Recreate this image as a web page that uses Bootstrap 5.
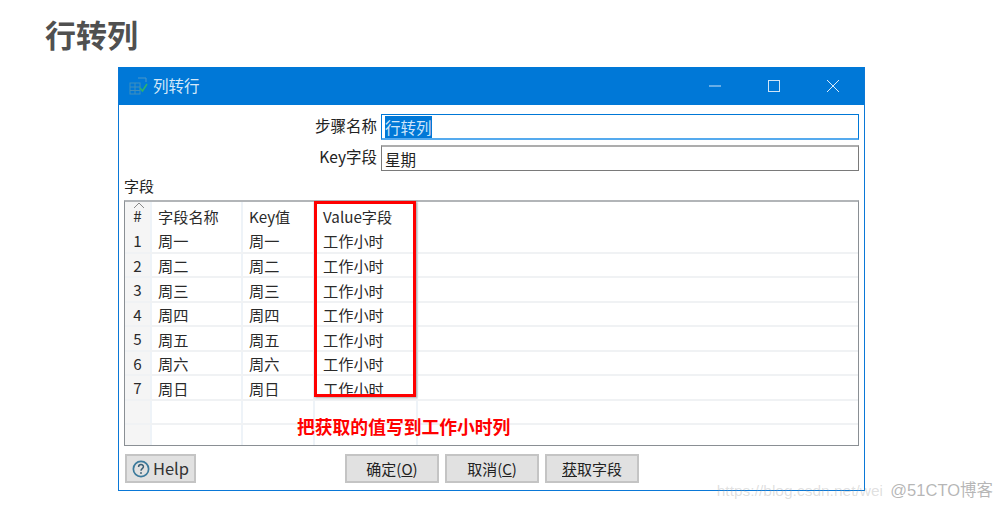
<!DOCTYPE html>
<html lang="zh-CN">
<head>
  <meta charset="UTF-8">
  <title>行转列</title>
  <link href="https://cdn.jsdelivr.net/npm/bootstrap@5.3.2/dist/css/bootstrap.min.css" rel="stylesheet">
  <style>
    html, body { height: 509px; overflow: hidden; }
    body { background: #fff; color: #222; font-family: "Noto Sans CJK SC", "Liberation Sans", sans-serif; font-size: 15.5px; position: relative; }
    .slide-title { font-size: 31px; line-height: 42px; font-weight: 700; color: #505050; padding: 13px 0 0 45px; height: 67px; margin: 0; }
    .dlg { width: 747px; height: 424px; margin-left: 118px; border: 1px solid #0a78d7; border-top: 0; position: relative; }
    .dlg-bar { height: 38px; background: #0078d7; color: #d5e8f8; font-size: 15.5px; padding-left: 10px; }
    .dlg-bar .dlg-name { margin-left: 4px; }
    .win-btns { margin-left: auto; padding-right: 24px; gap: 45px; }
    .win-btns svg { display: block; }
    .dlg-body { padding: 9px 5px 0 5px; }
    .form-line { height: 26px; margin-bottom: 5px; }
    .form-line label { width: 257px; text-align: right; padding-right: 4px; line-height: 22px; }
    .fake-input { width: 478px; height: 26px; border: 1px solid #7a7a7a; border-top: 2px solid #adadad; padding: 0 3px; line-height: 24px; font-size: 15.5px; }
    .fake-input.on { border: 1px solid #0078d7; border-bottom: 2px solid #55aaee; }
    .fake-input mark { background: #0078d7; color: #cfe6fa; padding: 0; }
    .grid-label { line-height: 20px; margin-top: 4px; margin-bottom: 4px; font-size: 15px; }
    .grid-box { width: 735px; height: 246px; border: 1px solid #8a8f94; border-top: 2px solid #b2b5b8; overflow: hidden; position: relative; }
    .grid-tbl { table-layout: fixed; width: 733px; border-collapse: collapse; font-size: 15.2px; }
    .grid-tbl th, .grid-tbl td { height: 24.5px; padding: 1px 0 0 6px; font-weight: 400; line-height: 20px; border-right: 2px solid #eef3f8; border-bottom: 2px solid #f0f2f4; color: #2a2a2a; white-space: nowrap; overflow: hidden; vertical-align: middle; }
    .grid-tbl th { height: 26px; border-bottom: 0; padding-top: 2px; }
    .grid-tbl td:last-child, .grid-tbl th:last-child { border-right: 0; }
    .grid-tbl .num-col { background: #f5f5f5; text-align: center; padding: 0; }
    .sort-mark { position: absolute; left: 8px; top: 0; }
    .red-frame { position: absolute; left: 195px; top: 134px; width: 102px; height: 196px; border: 3px solid #f00; box-shadow: 1px 1px 2px rgba(0,0,0,.35); pointer-events: none; }
    .red-note { position: absolute; left: 178px; top: 348px; color: #f00; font-size: 17.8px; font-weight: 700; line-height: 22px; white-space: nowrap; }
    .foot-row { padding-top: 8px; }
    .dlg-btn { height: 29px; background: #e1e1e1; border: 2px solid #c4c4c4; color: #222; font-size: 15px; line-height: 25px; text-align: center; padding: 0; }
    .help-btn { width: 71px; margin-left: 1px; font-size: 16.5px; color: #333; }
    .ok-btn { width: 94px; margin-left: 149px; }
    .cancel-btn { width: 94px; margin-left: 6px; }
    .fetch-btn { width: 94px; margin-left: 6px; }
    .help-ico { vertical-align: -3px; margin-right: 3px; }
    .wm { position: absolute; right: 9px; top: 479px; font-family: "Liberation Sans", "Noto Sans CJK SC", sans-serif; font-size: 15.5px; line-height: 22px; color: rgba(150,150,150,.3); white-space: nowrap; }
    .wm b { font-weight: 400; font-size: 16.5px; margin-left: 3px; color: rgba(110,110,110,.5); }
  </style>
</head>
<body>
<h1 class="slide-title">行转列</h1>

<div class="dlg">
  <div class="dlg-bar d-flex align-items-center">
    <svg width="20" height="20" viewBox="0 0 20 20">
      <rect x="1" y="7" width="10" height="11" fill="none" stroke="#3f8fbe" stroke-width="1"/>
      <path d="M1 11h10M1 14.5h10M6 7v11" stroke="#3f8fbe" fill="none"/>
      <path d="M9 2h8v4" stroke="#4a97c8" fill="none"/>
      <path d="M11 12l2.5 3L18 8" stroke="#2fb36a" stroke-width="1.6" fill="none"/>
    </svg>
    <span class="dlg-name">列转行</span>
    <div class="win-btns d-flex align-items-center">
      <svg width="14" height="14" viewBox="0 0 14 14"><path d="M1 7h12" stroke="#cfe4f7" stroke-width="1"/></svg>
      <svg width="14" height="14" viewBox="0 0 14 14"><rect x="1.5" y="1.5" width="11" height="11" fill="none" stroke="#cfe4f7" stroke-width="1"/></svg>
      <svg width="14" height="14" viewBox="0 0 14 14"><path d="M1 1l12 12M13 1L1 13" stroke="#dcecfa" stroke-width="1"/></svg>
    </div>
  </div>

  <div class="dlg-body">
    <div class="form-line d-flex">
      <label>步骤名称</label>
      <div class="fake-input on"><mark>行转列</mark></div>
    </div>
    <div class="form-line d-flex">
      <label>Key字段</label>
      <div class="fake-input">星期</div>
    </div>
    <div class="grid-label">字段</div>
    <div class="grid-box">
      <svg class="sort-mark" width="12" height="7" viewBox="0 0 12 7"><path d="M1 6l5-5 5 5" fill="none" stroke="#888"/></svg>
      <table class="grid-tbl" id="grid">
        <colgroup><col style="width:26px"><col style="width:91px"><col style="width:72px"><col style="width:103px"><col></colgroup>
        <thead>
          <tr><th class="num-col">#</th><th>字段名称</th><th>Key值</th><th class="ps-2">Value字段</th><th></th></tr>
        </thead>
        <tbody></tbody>
      </table>
    </div>
    <div class="foot-row d-flex">
      <button class="dlg-btn help-btn">
        <svg class="help-ico" width="18" height="18" viewBox="0 0 17 17"><circle cx="8.5" cy="8.5" r="7.2" fill="none" stroke="#3b7a9c" stroke-width="1.6"/><path d="M6.2 6.6c0-3 4.6-3 4.6-.2 0 1.800-2.300 1.700-2.300 3.700" fill="none" stroke="#3b5f75" stroke-width="1.400"/><circle cx="8.500" cy="12.300" r=".9" fill="#3b5f75"/></svg>Help
      </button>
      <button class="dlg-btn ok-btn">确定(<u>O</u>)</button>
      <button class="dlg-btn cancel-btn">取消(<u>C</u>)</button>
      <button class="dlg-btn fetch-btn"><u>获</u>取字段</button>
    </div>
  </div>

  <div class="red-frame"></div>
  <div class="red-note">把获取的值写到工作小时列</div>
</div>

<div class="wm">https://blog.csdn.net/wei <b>@51CTO博客</b></div>

<script>
const days = ["周一", "周二", "周三", "周四", "周五", "周六", "周日"];
const tbody = document.querySelector("#grid tbody");
days.forEach((d, i) => {
  tbody.innerHTML += `<tr><td class="num-col">${i + 1}</td><td>${d}</td><td>${d}</td><td class="ps-2">工作小时</td><td></td></tr>`;
});
for (let i = 0; i < 2; i++) {
  tbody.innerHTML += `<tr><td class="num-col"></td><td></td><td></td><td></td><td></td></tr>`;
}
</script>
<script src="https://cdn.jsdelivr.net/npm/bootstrap@5.3.2/dist/js/bootstrap.bundle.min.js"></script>
</body>
</html>
